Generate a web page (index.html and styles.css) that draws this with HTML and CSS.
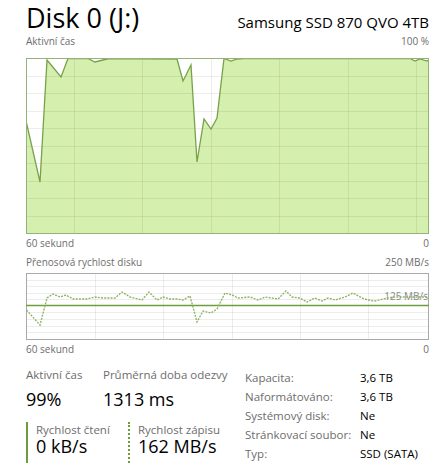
FILE: index.html
```html
<!DOCTYPE html>
<html lang="cs">
<head>
    <meta charset="UTF-8">
    <meta name="viewport" content="width=device-width, initial-scale=1.0">
    <title>Disk 0 (J:)</title>
    <link rel="stylesheet" href="styles.css">
</head>
<body>
    <div class="page">
        <div class="head">
            <h1 class="title">Disk 0 (J:)</h1>
            <div class="model">Samsung SSD 870 QVO 4TB</div>
        </div>

        <div class="axis axis-top">
            <span>Aktivní čas</span>
            <span>100 %</span>
        </div>
        <div class="graph graph-active">
            <svg width="403" height="176" viewBox="0 0 403 176">
                <polygon class="fill" points="0,65 14,124 21,2 35,19 42,0 62,0 69,4 81,1 84,0 147,1 151,1 157,23 165,7 171,104 178,61 185,71 191,60 198,0 205,3 211,1 218,0 384,0 389,3 394,1 401,3 402,2 402,175 0,175"/>
                <g class="grid">
                    <line x1="0" y1="18.5" x2="403" y2="18.5"/>
                    <line x1="0" y1="35.5" x2="403" y2="35.5"/>
                    <line x1="0" y1="53.5" x2="403" y2="53.5"/>
                    <line x1="0" y1="70.5" x2="403" y2="70.5"/>
                    <line x1="0" y1="88.5" x2="403" y2="88.5"/>
                    <line x1="0" y1="105.5" x2="403" y2="105.5"/>
                    <line x1="0" y1="123.5" x2="403" y2="123.5"/>
                    <line x1="0" y1="140.5" x2="403" y2="140.5"/>
                    <line x1="0" y1="158.5" x2="403" y2="158.5"/>
                    <line x1="48.5" y1="0" x2="48.5" y2="176"/>
                    <line x1="116.5" y1="0" x2="116.5" y2="176"/>
                    <line x1="185.5" y1="0" x2="185.5" y2="176"/>
                    <line x1="253.5" y1="0" x2="253.5" y2="176"/>
                    <line x1="322.5" y1="0" x2="322.5" y2="176"/>
                    <line x1="390.5" y1="0" x2="390.5" y2="176"/>
                </g>
                <polyline class="line" points="0.5,65 14,124 21,2 35,19 42,0.5 62,0.5 69,4 81,1 84,0.5 147,1 151,1 157,23 165,7 171,104 178,61 185,71 191,60 198,0.5 205,3 211,1 218,0.5 384,0.5 389,3 394,1 401,3 402.5,2"/>
                <rect class="frame" x="0.5" y="0.5" width="402" height="175"/>
            </svg>
        </div>
        <div class="axis axis-under">
            <span>60 sekund</span>
            <span>0</span>
        </div>

        <div class="axis axis-second">
            <span>Přenosová rychlost disku</span>
            <span>250 MB/s</span>
        </div>
        <div class="graph graph-transfer">
            <svg width="403" height="67" viewBox="0 0 403 67">
                <g class="grid">
                    <line x1="0" y1="7.5" x2="403" y2="7.5"/>
                    <line x1="0" y1="13.5" x2="403" y2="13.5"/>
                    <line x1="0" y1="20.5" x2="403" y2="20.5"/>
                    <line x1="0" y1="26.5" x2="403" y2="26.5"/>
                    <line x1="0" y1="39.5" x2="403" y2="39.5"/>
                    <line x1="0" y1="46.5" x2="403" y2="46.5"/>
                    <line x1="0" y1="53.5" x2="403" y2="53.5"/>
                    <line x1="0" y1="59.5" x2="403" y2="59.5"/>
                    <line x1="69.5" y1="0" x2="69.5" y2="67"/>
                    <line x1="137.5" y1="0" x2="137.5" y2="67"/>
                    <line x1="206.5" y1="0" x2="206.5" y2="67"/>
                    <line x1="274.5" y1="0" x2="274.5" y2="67"/>
                    <line x1="342.5" y1="0" x2="342.5" y2="67"/>
                </g>
                <rect class="frame frame-gray" x="0.5" y="0.5" width="402" height="66"/>
                <text class="mid-label" x="402" y="27" text-anchor="end">125 MB/s</text>
                <line class="solid" x1="0" y1="32.5" x2="403" y2="32.5"/>
                <polyline class="dashed" points="0.5,37 14,52 21,25 27,21 34,24 40,22 47,26 61,26 69,24 77,25 89,25 96,19 104,24 116,27 123,19 131,27 137,24 144,26 151,26 157,27 164,23 171,49 177,38 185,40 191,36 199,20 206,22 212,25 224,24 232,27 239,24 252,26 260,18 266,24 274,25 281,29 289,25 296,28 302,25 309,27 319,24 327,20 336,25 342,27 349,28 357,26 367,24 377,24 387,24 402.5,24"/>
            </svg>
        </div>
        <div class="axis axis-under">
            <span>60 sekund</span>
            <span>0</span>
        </div>

        <div class="stats">
            <div class="live">
                <div class="pair">
                    <div class="stat stat-first">
                        <div class="stat-label">Aktivní čas</div>
                        <div class="stat-value">99%</div>
                    </div>
                    <div class="stat">
                        <div class="stat-label">Průměrná doba odezvy</div>
                        <div class="stat-value">1313 ms</div>
                    </div>
                </div>
                <div class="pair pair-rates">
                    <div class="rate rate-read">
                        <div class="stat-label">Rychlost čtení</div>
                        <div class="stat-value">0 kB/s</div>
                    </div>
                    <div class="rate rate-write">
                        <div class="stat-label">Rychlost zápisu</div>
                        <div class="stat-value">162 MB/s</div>
                    </div>
                </div>
            </div>
            <div class="props">
                <span class="prop-name">Kapacita:</span><span class="prop-value">3,6 TB</span>
                <span class="prop-name">Naformátováno:</span><span class="prop-value">3,6 TB</span>
                <span class="prop-name">Systémový disk:</span><span class="prop-value">Ne</span>
                <span class="prop-name">Stránkovací soubor:</span><span class="prop-value">Ne</span>
                <span class="prop-name">Typ:</span><span class="prop-value">SSD (SATA)</span>
            </div>
        </div>
    </div>
</body>
</html>
```

FILE: styles.css
```css
body{
    margin: 0;
    background-color: white;
    font-family: 'Open Sans', 'Noto Sans', sans-serif;
    color: black;
}
.page{
    box-sizing: border-box;
    width: 437px;
    padding: 0px 8px 0px 26px;
}
.head{
    display: flex;
    justify-content: space-between;
    align-items: baseline;
    padding-top: 3px;
}
.title{
    margin: 0px;
    font-size: 27px;
    font-weight: 400;
    line-height: 30px;
}
.model{
    font-size: 15px;
    line-height: 20px;
}
.axis{
    display: flex;
    justify-content: space-between;
    font-size: 10px;
    line-height: 14px;
    color: #6d6d6d;
}
.axis-top{
    margin-top: 1px;
    margin-bottom: 10px;
}
.axis-under{
    margin-top: 2px;
}
.axis-second{
    margin-top: 5px;
    margin-bottom: 4px;
}
.graph svg{
    display: block;
}
.fill{
    fill: #d5efae;
}
.grid line{
    stroke: rgba(0, 0, 0, 0.07);
    stroke-width: 1;
}
.line{
    fill: none;
    stroke: #78a24a;
    stroke-width: 1.3;
}
.frame{
    fill: none;
    stroke: #94b27a;
    stroke-width: 1;
}
.frame-gray{
    stroke: #a9a9a9;
}
.mid-label{
    font-family: 'Open Sans', 'Noto Sans', sans-serif;
    font-size: 10px;
    fill: #8a8a8a;
}
.solid{
    stroke: #6e9d3c;
    stroke-width: 1.5;
}
.dashed{
    fill: none;
    stroke: #8db564;
    stroke-width: 1.4;
    stroke-dasharray: 2 1.2;
}
.stats{
    display: flex;
    margin-top: 11px;
}
.live{
    width: 219px;
    flex: none;
}
.pair{
    display: flex;
}
.stat-first{
    width: 77px;
}
.stat-label{
    font-size: 11.5px;
    line-height: 16px;
    color: #6d6d6d;
}
.stat-value{
    font-size: 18px;
    line-height: 22px;
    margin-top: 5px;
}
.pair-rates{
    margin-top: 12px;
}
.rate{
    padding: 0px 0px 7px 8px;
}
.rate .stat-label{
    line-height: 15px;
}
.rate .stat-value{
    line-height: 19px;
    margin-top: 0px;
}
.rate-read{
    width: 92px;
    border-left: 2px solid #6e9d3c;
}
.rate-write{
    border-left: 2px dotted #6e9d3c;
}
.props{
    display: grid;
    grid-template-columns: 115px auto;
    font-size: 11.5px;
    line-height: 19px;
    margin-top: 1px;
}
.prop-name{
    color: #6d6d6d;
}
```
